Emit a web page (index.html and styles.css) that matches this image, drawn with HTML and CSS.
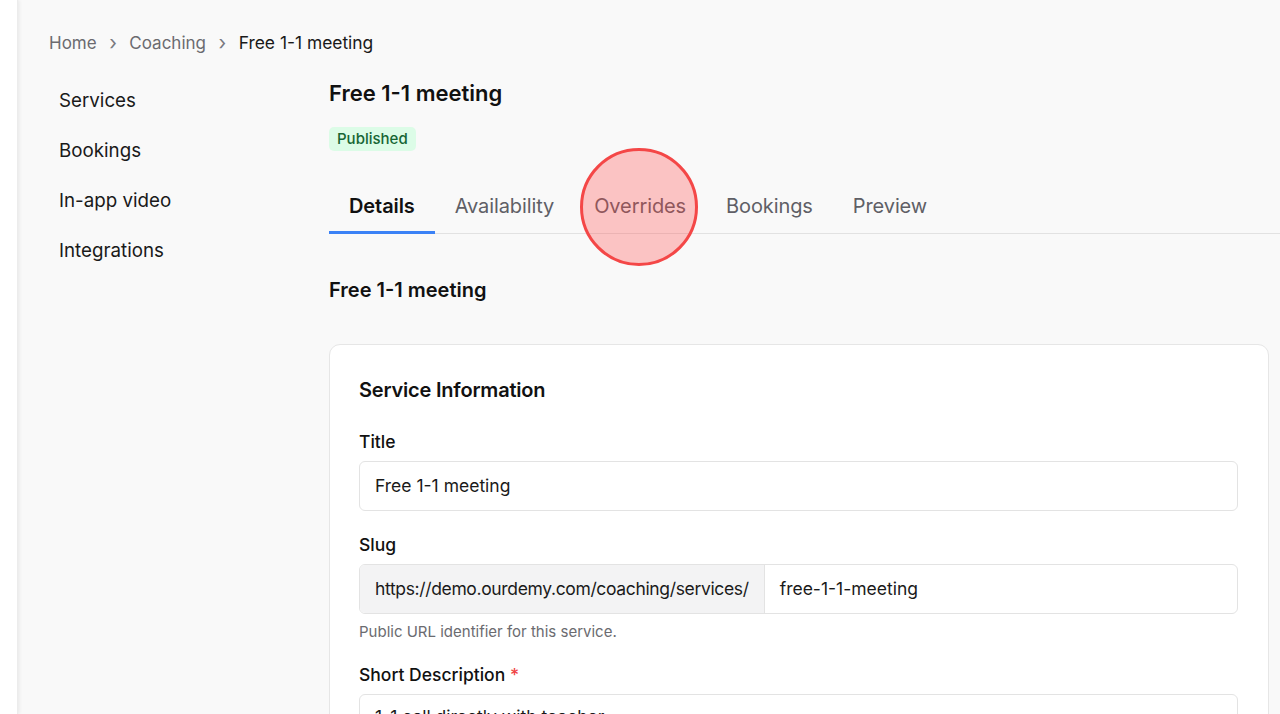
FILE: index.html
```html
<!DOCTYPE html>
<html>
<head>
  <meta charset="UTF-8">
  <link rel="stylesheet" href="styles.css">
  <title>Free 1-1 meeting</title>
</head>
<body>
  <div class="rail"></div>
  <div class="page">
    <nav class="crumbs">
      <a href="#">Home</a>
      <span class="sep">&rsaquo;</span>
      <a href="#">Coaching</a>
      <span class="sep">&rsaquo;</span>
      <span class="current">Free 1-1 meeting</span>
    </nav>

    <div class="layout">
      <ul class="side">
        <li><a href="#">Services</a></li>
        <li><a href="#">Bookings</a></li>
        <li><a href="#">In-app video</a></li>
        <li><a href="#">Integrations</a></li>
      </ul>

      <main class="main">
        <h1 class="title">Free 1-1 meeting</h1>
        <span class="badge">Published</span>

        <div class="tabs">
          <a class="tab active" href="#">Details</a>
          <a class="tab" href="#">Availability</a>
          <a class="tab marked" href="#">Overrides<span class="ring"></span></a>
          <a class="tab" href="#">Bookings</a>
          <a class="tab" href="#">Preview</a>
        </div>

        <h2 class="section">Free 1-1 meeting</h2>

        <div class="card">
          <h3 class="card-title">Service Information</h3>

          <div class="field">
            <label>Title</label>
            <div class="input">Free 1-1 meeting</div>
          </div>

          <div class="field">
            <label>Slug</label>
            <div class="input group">
              <span class="prefix">https://demo.ourdemy.com/coaching/services/</span>
              <span class="value">free-1-1-meeting</span>
            </div>
            <p class="hint">Public URL identifier for this service.</p>
          </div>

          <div class="field">
            <label>Short Description <span class="req">*</span></label>
            <div class="input area">1-1 call directly with teacher</div>
          </div>
        </div>
      </main>
    </div>
  </div>
</body>
</html>
```

FILE: styles.css
```css
* {
  box-sizing: border-box;
}

html, body {
  margin: 0;
  height: 714px;
  overflow: hidden;
}

body {
  background: #f9f9f9;
  font-family: Inter, "Noto Sans", sans-serif;
  color: #111;
  display: flex;
}

a {
  color: inherit;
  text-decoration: none;
}

.rail {
  width: 18px;
  flex: none;
  background: #fff;
  box-shadow: 1px 0 4px rgba(0, 0, 0, 0.08);
  border-right: 1px solid #ececec;
}

.page {
  flex: 1;
  padding: 31px 0 0 31px;
}

/* breadcrumb */
.crumbs {
  font-size: 17px;
  line-height: 24px;
  color: #6b6b70;
  display: flex;
  align-items: center;
  gap: 12.5px;
}

.crumbs .sep {
  font-size: 20px;
  color: #7a7a80;
}

.crumbs .current {
  color: #1a1a1a;
  font-size: 17.4px;
}

.layout {
  display: flex;
  margin-top: 21px;
}

/* left menu */
.side {
  list-style: none;
  margin: 0;
  padding: 0 0 0 10px;
  width: 280px;
  flex: none;
}

.side li {
  height: 50px;
  line-height: 50px;
  font-size: 18.75px;
  color: #1a1a1a;
}

.main {
  flex: 1;
  padding-right: 11px;
  padding-top: 3px;
}

.title {
  margin: 0;
  font-size: 22px;
  font-weight: 600;
  line-height: 28px;
}

.badge {
  display: inline-block;
  margin-top: 20px;
  padding: 0 8px;
  height: 24px;
  line-height: 24px;
  border-radius: 5px;
  background: #dcfce7;
  color: #166534;
  font-size: 15px;
  font-weight: 500;
}

/* tabs */
.tabs {
  display: flex;
  margin-top: 29px;
  margin-right: -11px;
  border-bottom: 1px solid #e2e2e2;
}

.tab {
  position: relative;
  padding: 13px 20px 12px;
  font-size: 20px;
  line-height: 26px;
  letter-spacing: -0.1px;
  color: #5f5f66;
  border-bottom: 3px solid transparent;
  margin-bottom: -1px;
}

.tab.active {
  color: #111;
  font-weight: 600;
  border-bottom-color: #3b82f6;
}

.ring {
  position: absolute;
  left: 50%;
  top: 50%;
  width: 118px;
  height: 118px;
  margin: -58px 0 0 -60px;
  border-radius: 50%;
  border: 3px solid #f44747;
  background: rgba(255, 70, 70, 0.3);
}

.section {
  margin: 42px 0 0;
  font-size: 20px;
  font-weight: 600;
  line-height: 28px;
}

/* card */
.card {
  margin-top: 40px;
  background: #fff;
  border: 1px solid #e6e6e6;
  border-radius: 11px;
  padding: 31px 30px 40px 29px;
}

.card-title {
  margin: 0;
  font-size: 20px;
  font-weight: 600;
  line-height: 28px;
  letter-spacing: -0.2px;
}

.field {
  margin-top: 26px;
}

.field + .field {
  margin-top: 22px;
}

.field + .field + .field {
  margin-top: 21px;
}

.field label {
  display: block;
  font-size: 17.5px;
  font-weight: 500;
  line-height: 24px;
  margin-bottom: 7px;
}

.req {
  color: #ef4444;
}

.input {
  height: 50px;
  border: 1px solid #e3e3e3;
  border-radius: 6px;
  padding: 0 15px;
  font-size: 17.5px;
  line-height: 48px;
  color: #1a1a1a;
  background: #fff;
}

.input.group {
  display: flex;
  padding: 0;
  overflow: hidden;
}

.group .prefix {
  background: #f3f3f4;
  border-right: 1px solid #e3e3e3;
  padding: 0 15px;
  letter-spacing: -0.35px;
}

.group .value {
  padding: 0 15px;
}

.hint {
  margin: 8px 0 0;
  font-size: 15px;
  line-height: 20px;
  color: #6b6b70;
}

.input.area {
  height: 100px;
  line-height: 24px;
  padding-top: 10px;
}
```
